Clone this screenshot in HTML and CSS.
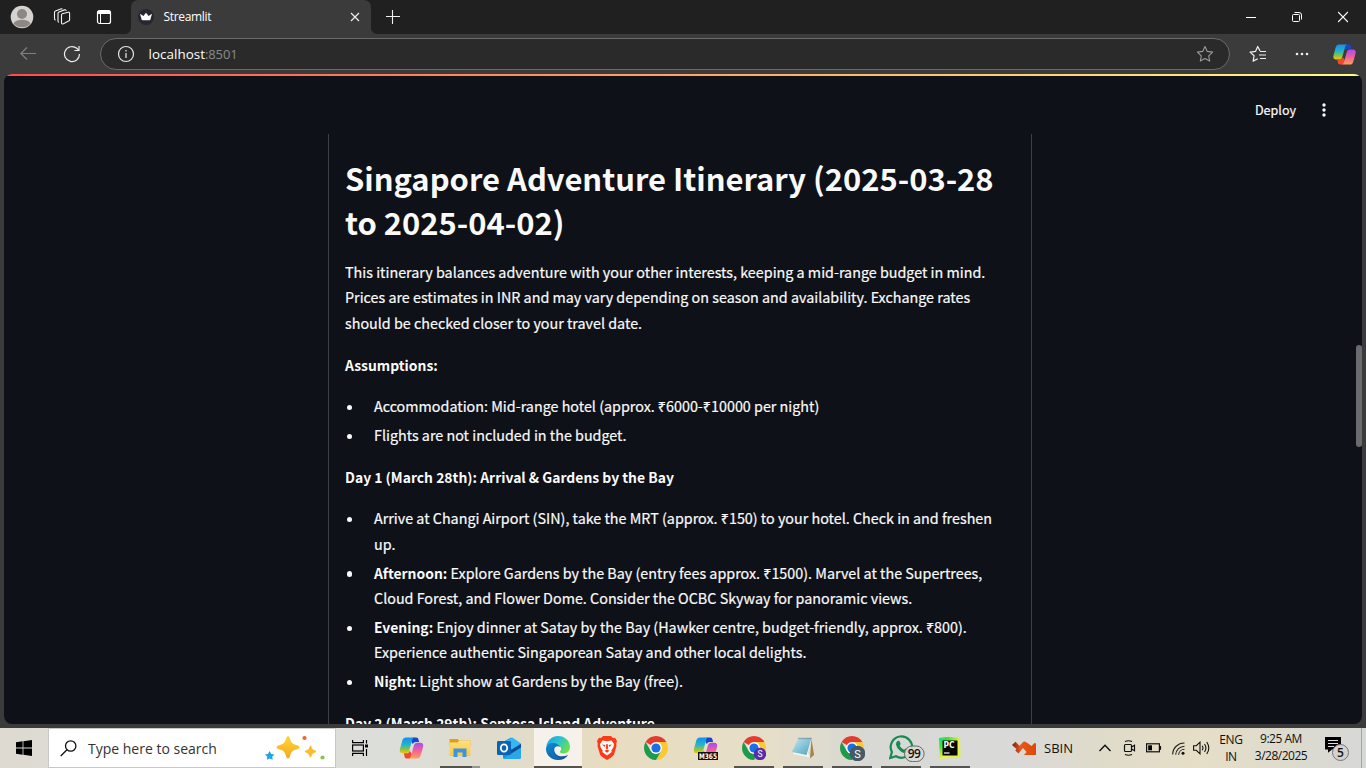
FILE: index.html
```html
<!DOCTYPE html>
<html lang="en">
<head>
<meta charset="utf-8">
<title>Streamlit</title>
<link rel="stylesheet" href="styles.css">
</head>
<body>
<svg class="defs" width="0" height="0">
  <defs>
    <linearGradient id="cpA" x1="0" y1="0" x2="0" y2="1"><stop offset="0" stop-color="#1a8fe8"/><stop offset=".45" stop-color="#22b3d0"/><stop offset=".75" stop-color="#8fc33a"/><stop offset="1" stop-color="#f5c518"/></linearGradient>
    <linearGradient id="cpB" x1="0" y1="0" x2="0" y2="1"><stop offset="0" stop-color="#a64bf0"/><stop offset=".5" stop-color="#f0609a"/><stop offset="1" stop-color="#ffa05a"/></linearGradient>
    <linearGradient id="edA" x1="0" y1="0" x2="1" y2=".6"><stop offset="0" stop-color="#1b9de2"/><stop offset=".5" stop-color="#2bc3d2"/><stop offset="1" stop-color="#6adf50"/></linearGradient>
    <linearGradient id="edB" x1="0" y1="0" x2="1" y2="1"><stop offset="0" stop-color="#0d8ddb"/><stop offset="1" stop-color="#114a8b"/></linearGradient>
    <linearGradient id="star" x1="0" y1="0" x2="0" y2="1"><stop offset="0" stop-color="#ffd83a"/><stop offset="1" stop-color="#f2a71b"/></linearGradient>
    <linearGradient id="fold" x1="0" y1="0" x2="0" y2="1"><stop offset="0" stop-color="#ffe082"/><stop offset="1" stop-color="#fbc646"/></linearGradient>
    <linearGradient id="note" x1="0" y1="0" x2="1" y2="1"><stop offset="0" stop-color="#c4e8f0"/><stop offset="1" stop-color="#4ba3bd"/></linearGradient>
    <linearGradient id="pyc" x1="0" y1="0" x2="1" y2="1"><stop offset="0" stop-color="#21d789"/><stop offset=".25" stop-color="#3be234"/><stop offset=".55" stop-color="#f2f03a"/><stop offset="1" stop-color="#d8ee4a"/></linearGradient>
    <linearGradient id="sbn" x1="0" y1="0" x2="1" y2="0"><stop offset="0" stop-color="#7d1d0c"/><stop offset=".35" stop-color="#e8571c"/><stop offset="1" stop-color="#dd4a06"/></linearGradient>
    <symbol id="copilot" viewBox="0 0 24 22">
      <path d="M13.5.5h3.200c1.200 0 1.900.8 2.200 1.800l.7 2.700h-3.200c-1.600 0-2.600.8-3 2.300L11 3z" fill="#1846c4"/>
      <path d="M6.500.5h8.200c-1 .3-1.600 1.200-2 2.500l-3 10.500c-.5 1.700-1.500 2.800-3.300 2.800H3.200C.8 16.300-.2 14.600.4 12.200l2.400-8.700C3.400 1.500 4.600.5 6.500.5z" fill="url(#cpA)"/>
      <path d="M10.500 21.500H7.300c-1.200 0-1.900-.8-2.200-1.800L4.400 16.300h2.500c1.800 0 2.800-1 3.300-2.600L13 18z" fill="#f04a2a"/>
      <path d="M17.500 21.500H9.400c1-.3 1.600-1.200 2-2.500l3-10.500c.5-1.700 1.500-2.800 3.300-2.800h3.100c2.400 0 3.400 1.700 2.800 4.100l-2.400 8.700c-.6 2-1.800 3-3.700 3z" fill="url(#cpB)"/>
    </symbol>
    <symbol id="chrome" viewBox="0 0 24 24">
      <path d="M12 12 1.610 6A12 12 0 0 1 22.390 6z" fill="#e33b2e"/>
      <path d="M12 12V6H22.390A12 12 0 0 1 12 24l5.200-9z" fill="#fcc934"/>
      <path d="M1.610 6 6.800 15 12 18l5.200-3L12 24A12 12 0 0 1 1.610 6z" fill="#1e9a4a"/>
      <circle cx="12" cy="12" r="5.900" fill="#fff"/><circle cx="12" cy="12" r="4.600" fill="#1a6fe8"/>
    </symbol>
  </defs>
</svg>

<div class="tabstrip">
  <div class="tabtools">
    <svg width="24" height="24" viewBox="0 0 24 24"><circle cx="12" cy="12" r="11.300" fill="#d5d2cf"/><circle cx="12" cy="9" r="5" fill="#8d8884"/><path d="M3.500 18.500c2-3 5-3.700 8.500-3.700s6.500.7 8.500 3.700a11.300 11.300 0 0 1-17 0z" fill="#8d8884"/></svg>
    <svg width="18" height="18" viewBox="0 0 18 18" fill="none" stroke="#f2f2f2" stroke-width="1.100"><path d="M9.300 5.700 15 4.200q1.600-.3 1.600 1.200v6.300q0 1-1 1.400l-5.200 2.600q-1.900.8-1.900-1V7.200q0-1.200.8-1.500z"/><path d="M6 14.200q-1 0-1-1.200V5.300q0-1 1-1.400l5.500-2q1.500-.4 1.700.9"/><path d="M2.700 12q-1.200 0-1.200-1.200V4.400q0-1 1-1.400L7.600 1q1.500-.5 1.700.4"/></svg>
    <svg width="16" height="16" viewBox="0 0 16 16"><rect x="1.500" y="1.500" width="13" height="13" rx="2" fill="none" stroke="#fff" stroke-width="1.200"/><path d="M1.500 5V3.500a2 2 0 0 1 2-2h9a2 2 0 0 1 2 2V5z" fill="#fff"/><path d="M4.500 5v9" stroke="#fff"/></svg>
  </div>
  <div class="tab">
    <svg width="16" height="16" viewBox="0 0 16 16"><circle cx="8" cy="8" r="8" fill="#262730"/><path d="M2 4.700 5.400 7 8 3.800 10.600 7 14 4.700 12.400 10.400q-.2.800-1 .8H4.600q-.8 0-1-.8z" fill="#fff"/></svg>
    <span class="tabtitle">Streamlit</span>
    <svg width="10" height="10" viewBox="0 0 10 10" stroke="#eee" stroke-width="1.200"><path d="M1 1l8 8M9 1 1 9"/></svg>
  </div>
  <svg class="plus" width="14" height="14" viewBox="0 0 14 14" stroke="#f0f0f0" stroke-width="1.100"><path d="M6.500 0v14M0 6.500h14"/></svg>
  <div class="winctl">
    <svg width="10" height="12" viewBox="0 0 10 12" stroke="#fff"><path d="M0 6.500h10"/></svg>
    <svg width="10" height="12" viewBox="0 0 10 12" fill="none" stroke="#fff"><rect x=".5" y="3.500" width="7" height="7" rx="1"/><path d="M2.500 1.500H7q2.500 0 2.500 2.500v4.500"/></svg>
    <svg width="10" height="12" viewBox="0 0 10 12" stroke="#fff" stroke-width="1.200"><path d="M0 1l10 10M10 1 0 11"/></svg>
  </div>
</div>

<div class="toolbar">
  <svg class="back" width="16" height="14" viewBox="0 0 16 14" fill="none" stroke="#808080" stroke-width="1.200"><path d="M16 6.500H.8M7 .5l-6.200 6 6.200 6"/></svg>
  <svg class="reload" width="18" height="18" viewBox="0 0 18 18" fill="none" stroke="#eee" stroke-width="1.200"><path d="M16.500 9a7.500 7.500 0 1 1-2.700-5.700L15.800 5.300"/><path d="M16 1v4.500h-4.600"/></svg>
  <div class="address">
    <svg width="18" height="18" viewBox="0 0 18 18"><circle cx="9" cy="9" r="7.500" fill="none" stroke="#e6e6e6" stroke-width="1.200"/><path d="M9 8v5M9 5v1.500" stroke="#c8c8c8" stroke-width="1.500"/></svg>
    <span class="url"><span class="host">localhost</span><span class="port">:8501</span></span>
    <svg width="18" height="18" viewBox="0 0 18 18" fill="none" stroke="#9a9a9a" stroke-width="1.100" stroke-linejoin="round"><path d="M9 1.500l2.300 4.900 5.300.7-3.900 3.700 1 5.300L9 13.500l-4.700 2.600 1-5.300L1.400 7.100l5.300-.7z"/></svg>
  </div>
  <svg class="favs" width="18" height="18" viewBox="0 0 18 18" fill="none" stroke="#f0f0f0" stroke-width="1.200" stroke-linejoin="round"><path d="M11 5.900 8.700 1.500 6.600 6.300l-5.500.8 4 3.700-1 5.300 4.700-2.400"/><path d="M11 6.500h6M10 10h7M11 13.500h6"/></svg>
  <svg class="more" width="14" height="4" viewBox="0 0 14 4" fill="#eee"><circle cx="2" cy="2" r="1.300"/><circle cx="7" cy="2" r="1.300"/><circle cx="12" cy="2" r="1.300"/></svg>
  <svg class="cp" width="23" height="21"><use href="#copilot"/></svg>
</div>

<div class="frame">
  <div class="page">
    <div class="appbar">
      <span class="deploy">Deploy</span>
      <svg class="kebab" width="4" height="14" viewBox="0 0 4 14" fill="#fafafa"><circle cx="2" cy="2" r="1.700"/><circle cx="2" cy="7" r="1.700"/><circle cx="2" cy="12" r="1.700"/></svg>
    </div>
    <div class="doc">
      <h1>Singapore Adventure Itinerary (2025-03-28<br>to 2025-04-02)</h1>
      <p>This itinerary balances adventure with your other interests, keeping a mid-range budget in mind.<br>Prices are estimates in INR and may vary depending on season and availability. Exchange rates<br>should be checked closer to your travel date.</p>
      <p><b>Assumptions:</b></p>
      <ul>
        <li><div>Accommodation: Mid-range hotel (approx. ₹6000-₹10000 per night)</div></li>
        <li><div>Flights are not included in the budget.</div></li>
      </ul>
      <p><b>Day 1 (March 28th): Arrival &amp; Gardens by the Bay</b></p>
      <ul>
        <li><div>Arrive at Changi Airport (SIN), take the MRT (approx. ₹150) to your hotel. Check in and freshen<br>up.</div></li>
        <li><div><b>Afternoon:</b> Explore Gardens by the Bay (entry fees approx. ₹1500). Marvel at the Supertrees,<br>Cloud Forest, and Flower Dome. Consider the OCBC Skyway for panoramic views.</div></li>
        <li><div><b>Evening:</b> Enjoy dinner at Satay by the Bay (Hawker centre, budget-friendly, approx. ₹800).<br>Experience authentic Singaporean Satay and other local delights.</div></li>
        <li><div><b>Night:</b> Light show at Gardens by the Bay (free).</div></li>
      </ul>
      <p><b>Day 2 (March 29th): Sentosa Island Adventure</b></p>
    </div>
    <div class="scrollthumb"></div>
  </div>
</div>

<div class="taskbar">
  <div class="start"><svg width="16" height="16" viewBox="0 0 16 16"><path d="M0 2.200 6.600 1.300v6.300H0zM7.400 1.200 16 0v7.600H7.400zM0 8.400h6.600v6.300L0 13.800zM7.400 8.400H16V16l-8.600-1.200z"/></svg></div>
  <div class="search">
    <svg width="17" height="17" viewBox="0 0 17 17" fill="none" stroke="#111" stroke-width="1.300"><circle cx="10.700" cy="6" r="5.200"/><path d="M7 9.700.7 16"/></svg>
    <span class="hint">Type here to search</span>
    <svg width="62" height="26" viewBox="0 0 62 26"><path d="M24 1q1.500 0 2 2.500c1 4 2.500 5.700 7 6.800q2.500.6 2.500 2t-2.500 2c-4.500 1.100-6 2.800-7 6.800q-.5 2.500-2 2.500t-2-2.500c-1-4-2.500-5.700-7-6.800q-2.500-.6-2.500-2t2.500-2c4.500-1.100 6-2.800 7-6.800Q22.500 1 24 1z" fill="url(#star)"/><path d="M46.500 10.500q.8 0 1.200 2 .5 2.100 2.800 2.800 1.700.4 1.700 1.200t-1.700 1.200q-2.300.6-2.800 2.800-.4 2-1.200 2t-1.200-2q-.5-2.200-2.800-2.800-1.700-.4-1.700-1.200t1.700-1.200q2.300-.7 2.800-2.800.4-2 1.200-2z" fill="#f9bd2d"/><path d="M5.500 16l1.800 3 3.200.4-2.300 2.300.5 3.100-3-1.400-2.700 1.300.2-3.100L.8 19.600l3.200-.5z" fill="#18a8e8"/><circle cx="40.500" cy="3" r="2.100" fill="#f0652f"/><circle cx="58.500" cy="22.500" r="2.100" fill="#8cc63f"/></svg>
  </div>
  <div class="taskview"><svg width="17" height="16" viewBox="0 0 17 16" fill="none" stroke="#000" stroke-width="1.200"><path d="M.6 0v2.600h10.800V0M.6 16v-2.600h10.800V16M14.500 0v3.500M14.500 9v7"/><rect x=".6" y="5" width="10.800" height="6"/><path d="M13 6h3" stroke-width="3"/></svg></div>
  <div class="apps">
    <div class="app"><svg width="25" height="22"><use href="#copilot"/></svg></div>
    <div class="app run multi"><svg width="22" height="20" viewBox="0 0 22 20"><path d="M.500 1h8l1.500 1.500h11.500V8H.5z" fill="#e0a010"/><path d="M.500 4.500h8l2-2h11V18H.5z" fill="url(#fold)"/><path d="M4.500 10.500h13V19h-4v-4.500h-5V19h-4z" fill="#4095d8"/></svg></div>
    <div class="app"><svg width="24" height="24" viewBox="0 0 24 24"><path d="M6 6 14 1.500 24 8v13q0 2-2 2H8q-2 0-2-2z" fill="#1490df"/><path d="M8 5.500l7.500-4 8.500 6-9 6z" fill="#35b8f1"/><path d="M14 14l10-6v5L12 21z" fill="#0a4a96"/><path d="M6 22.500 24 11.500V21q0 2-2 2H8z" fill="#28a8ea"/><rect y="5" width="14" height="14" rx="1.300" fill="#0b63b8"/><ellipse cx="7" cy="12" rx="3.200" ry="3.700" fill="none" stroke="#fff" stroke-width="1.800"/></svg></div>
    <div class="app run active"><svg width="24" height="24" viewBox="0 0 24 24"><path d="M.3 10.500C1.300 4.200 6 0 12 0c7 0 12 5 12 10.800 0 4.200-3 6.700-6.700 6.700-2.500 0-3.600-1-3.300-2 1.300-1 1.500-2.800.7-4.200C12.800 8 6 5.500.3 10.500z" fill="url(#edA)"/><path d="M0 12.500C.3 8.700 3.500 6.800 7 6.900c3.500.1 6.200 1.700 7.400 4-5.500-2.300-7.800 2.500-4.900 6.500 2.500 3.400 8 3.700 12.700 1.500C19.700 22.500 16 24 12 24 5.500 24-.3 19 0 12.500z" fill="url(#edB)"/><path d="M7.500 13c-.9 6.300 4.500 9.800 8.500 10.300C9 25 3.500 19 5 14.500q.8-1.800 2.500-1.500z" fill="#1474bd" opacity=".65"/></svg></div>
    <div class="app"><svg width="20" height="24" viewBox="0 0 20 24"><path d="M6 0h8l2 2 2-.2L20 5l-.8 3 .3 2-2.500 8.500Q16.500 20 10 24 3.500 20 3 18.500L.5 10l.3-2L0 5l2-3.200L4 2z" fill="#fb3a18"/><path d="M5.500 4.500 10 5.300l4.500-.8L17 8l-.7 3.500-2 3 .4 1.500L10 19.500 5.300 16l.4-1.500-2-3L3 8z" fill="#fff"/><path d="M5 8.500l3.500.5L7.500 11zM15 8.500l-3.500.5 1 2zM9.300 8h1.400l.5 4.500-1.200.8-1.200-.8zM7.500 14.700l2.500-1.200 2.500 1.200-2.500 2z" fill="#fb3a18"/></svg></div>
    <div class="app"><svg width="24" height="24"><use href="#chrome"/></svg></div>
    <div class="app"><svg width="25" height="24" viewBox="0 0 25 24"><svg width="25" height="22" y="1"><use href="#copilot"/></svg><rect x="5" y="16" width="20" height="8" fill="#101010"/><text x="6" y="22.600" class="m365" textLength="18" lengthAdjust="spacingAndGlyphs">M365</text></svg></div>
    <div class="app run"><svg width="24" height="24" viewBox="0 0 24 24"><use href="#chrome" width="24" height="24"/><circle cx="18" cy="18" r="6.200" fill="#5b2ca8"/><text x="18" y="21" class="initial s1">S</text></svg></div>
    <div class="app run"><svg width="24" height="24" viewBox="0 0 24 24"><path d="M20.500 3l2.500 16-4 3.500z" fill="#a6834a"/><path d="M7.500 2h13L17 17.500l2 4L2 18z" fill="#f4f4f0"/><path d="M7.500 2h13l-5 17L1 16z" fill="url(#note)"/><path d="M7.500 2.500h13" stroke="#6a7a80" stroke-width="1.500" stroke-dasharray="1 1"/></svg></div>
    <div class="app run"><svg width="26" height="26" viewBox="0 0 26 26"><use href="#chrome" x="1" y="1" width="24" height="24"/><circle cx="18.500" cy="18.500" r="7.800" fill="#455a64"/><text x="18.500" y="22.500" class="initial s2">S</text></svg></div>
    <div class="app run whats"><svg width="36" height="28" viewBox="0 0 36 28"><path d="M1.200 24 2.900 18A10.700 10.700 0 1 1 7 22.300z" fill="none" stroke="#178a52" stroke-width="2.200"/><path d="M8.500 7q1.500-1 2.300.7l.8 2q.2.700-1 2 1.500 2.700 4.500 4 1.200-1.500 1.700-1.300l2.700 1.400q.5 3-2.700 3.500C13 19.500 7 14 7 10q.2-2 1.500-3z" fill="#178a52"/><rect x="15.500" y="12" width="19.600" height="15.600" rx="7.800" fill="#dadad6" fill-opacity=".9" stroke="#666" stroke-width="1"/><text x="25.300" y="24.300" class="count" textLength="13">99</text></svg></div>
    <div class="app run"><svg width="22" height="22" viewBox="0 0 22 22"><path d="M0 1 7 0l14 1 .5 20L11 21 1 21.500z" fill="url(#pyc)"/><rect x="3.500" y="3.500" width="15" height="15" fill="#050505"/><text x="4.600" y="11" class="pc" textLength="11" lengthAdjust="spacingAndGlyphs">PC</text><path d="M5 16h5.500" stroke="#fff" stroke-width="1.200"/></svg></div>
  </div>
  <div class="tray">
    <svg class="stock" width="24" height="14" viewBox="0 0 24 14"><path d="M0 4 3.500.8l4 4L12 .3l3.500 1.700 4 3L22.500 2 24 2.500V14H12l2.500-3-3.500-4L6.500 12.500 3.300 9.500 4.500 8z" fill="url(#sbn)"/></svg>
    <span class="sbin">SBIN</span>
    <svg class="chev" width="12" height="8" viewBox="0 0 12 8" fill="none" stroke="#111" stroke-width="1.400"><path d="M.5 7 6 1.200 11.500 7"/></svg>
    <svg class="cam" width="13" height="16" viewBox="0 0 13 16" fill="none" stroke="#111" stroke-width="1.200"><rect x="1.500" y="4.500" width="7" height="7" rx="1"/><path d="M8.500 7l3-1.800v5.600l-3-1.800M2 1.500q3.500-1.500 7 0M2 14.500q3.500 1.500 7 0"/></svg>
    <svg class="bat" width="16" height="10" viewBox="0 0 16 10"><rect x=".6" y=".8" width="12.800" height="8" fill="none" stroke="#111" stroke-width="1.200"/><rect x="2.200" y="2.300" width="3.800" height="5"/><path d="M14.500 3v3.800" stroke="#111" stroke-width="1.200"/></svg>
    <svg class="wifi" width="13" height="13" viewBox="0 0 13 13" fill="none" stroke="#222" stroke-width="1.100"><path d="M.7 12.500A11.500 11.500 0 0 1 12.500 1M3.700 12.700a9 9 0 0 1 8.800-8.500M6.600 12.700a6 6 0 0 1 5.900-5.500"/><circle cx="11" cy="11.300" r="1.500" fill="#111" stroke="none"/></svg>
    <svg class="vol" width="17" height="14" viewBox="0 0 17 14" fill="none" stroke="#111" stroke-width="1.100"><path d="M.6 4.700h2.700L7 1.200v11.600L3.300 9.300H.6zM9.200 4.800q1.500 2.200 0 4.400M11.500 3q2.800 4 0 8M13.700 1q4.200 6 0 12"/></svg>
    <div class="stack lang"><span>ENG</span><span>IN</span></div>
    <div class="stack clock"><span>9:25 AM</span><span>3/28/2025</span></div>
    <svg class="action" width="26" height="26" viewBox="0 0 26 26"><path d="M1 2h16v12.500H8l-4 3.300v-3.300H1z" fill="#000"/><path d="M4 5.500h10M4 8.500h10M4 11.500h6" stroke="#ddd"/><circle cx="16.500" cy="17.500" r="8" fill="#d2d3d0" stroke="#777"/><text x="16.500" y="21.700" class="five">5</text></svg>
    <div class="peek"></div>
  </div>
</div>
</body>
</html>
```
FILE: styles.css
```css
* { box-sizing: border-box; }
body { margin: 0; width: 1366px; height: 768px; overflow: hidden; background: #3b3b3b; font-family: "Open Sans", "Noto Sans", sans-serif; display: flex; flex-direction: column; }
svg { display: block; flex: none; }
span { white-space: nowrap; }
.defs { position: absolute; }

.tabstrip { height: 34px; flex: none; background: #202020; display: flex; align-items: center; }
.tabtools { width: 131px; padding-left: 10px; display: flex; align-items: center; }
.tabtools svg:nth-child(2) { margin-left: 19px; }
.tabtools svg:nth-child(3) { margin-left: 25px; }
.tab { width: 240px; height: 34px; background: #3b3b3b; border-radius: 7px 7px 0 0; display: flex; align-items: center; padding: 0 11px 0 7px; color: #fff; font-size: 12px; position: relative; }
.tab::before, .tab::after { content: ""; position: absolute; bottom: 0; width: 6px; height: 6px; }
.tab::before { left: -6px; background: radial-gradient(circle at 0 0, #202020 5.500px, #3b3b3b 6.500px); }
.tab::after { right: -6px; background: radial-gradient(circle at 100% 0, #202020 5.500px, #3b3b3b 6.500px); }
.tabtitle { margin-left: 9.500px; padding-bottom: 1px; flex: 1; letter-spacing: -.32px; }
.plus { margin-left: 15px; }
.winctl { margin-left: auto; margin-right: 18px; display: flex; gap: 36px; }

.toolbar { height: 40px; flex: none; display: flex; align-items: center; background: #3b3b3b; }
.back { margin-left: 20px; }
.reload { margin-left: 27px; }
.address { margin-left: 19px; width: 1130px; height: 32px; background: #2a2a2a; border: 1px solid #6a6a6a; border-radius: 16px; display: flex; align-items: center; padding: 0 15px 0 16px; }
.url { margin-left: 13.500px; flex: 1; font-size: 13px; color: #fff; }
.host { font-size: 13.400px; letter-spacing: .05px; }
.port { color: #8a8a8a; letter-spacing: -.15px; }
.favs { margin-left: 19px; }
.more { margin-left: 28px; }
.cp { margin-left: 24px; }

.frame { height: 654px; flex: none; padding: 0 4px 4px; background: #3b3b3b; }
.page { height: 650px; background: #0e1117; border-radius: 8px; overflow: hidden; position: relative; font-family: "Noto Sans CJK SC", "Noto Sans", sans-serif; color: #fafafa; }
.page::before { content: ""; position: absolute; left: 0; right: 0; top: 0; height: 2px; background: linear-gradient(90deg, #ff4b4b, #fffd80); }
.appbar { height: 60px; padding: 13px 36px 0 0; display: flex; justify-content: flex-end; align-items: center; gap: 26px; font-size: 12.550px; }
.deploy { padding-bottom: 2px; -webkit-text-stroke: .2px #fafafa; }
.kebab { margin-bottom: 2px; }
.doc { margin-left: 324px; width: 704px; height: 590px; border: solid #3c3f45; border-width: 0 1px; padding: 22px 0 0 16px; font-size: 14.330px; line-height: 25.600px; overflow: hidden; white-space: nowrap; -webkit-text-stroke: .2px #fafafa; }
.doc b { font-size: 13.900px; line-height: 1; -webkit-text-stroke: 0; }
.doc h1 { margin: 0 0 14.800px; font-size: 30.950px; line-height: 44px; font-weight: 700; -webkit-text-stroke: 0; }
.doc p { margin: 0 0 16px; }
.doc ul { list-style: none; margin: 0 0 16px; padding: 0; }
.doc li { display: flex; align-items: flex-start; margin-bottom: 3.200px; }
.doc li::before { content: ""; width: 5.400px; height: 5.400px; border-radius: 50%; background: #fafafa; margin: 11.800px 22px 0 1.600px; }
.doc li:last-child { margin-bottom: 0; }
.scrollthumb { position: absolute; right: 0; top: 271px; width: 6px; height: 102px; border-radius: 3px; background: #6b6b6f; }

.taskbar { height: 40px; flex: none; display: flex; align-items: center; color: #111; background: linear-gradient(90deg, #dedad2 0, #dcdeda 390px, #e0dccc 500px, #e8dcc0 610px, #e6dfc8 760px, #d8d8d4 870px, #d9d9d9 1010px, #dfdbca 1100px, #e6dec6 1200px, #d6d8d6 1366px); }
.start { width: 48px; display: flex; justify-content: center; }
.search { width: 288px; height: 40px; background: #fff; border: 1px solid #c8c8c8; display: flex; align-items: center; padding: 0 9px 0 11px; font-size: 14px; color: #333; }
.hint { margin-left: 11px; flex: 1; }
.taskview { width: 51px; padding-left: 16px; }
.apps { display: flex; gap: 1px; height: 40px; }
.app { width: 48px; height: 40px; display: flex; align-items: center; justify-content: center; position: relative; }
.whats { padding: 0 0 0 11px; }
.run::after { content: ""; position: absolute; left: 4px; bottom: 0; width: 40px; height: 2px; background: #55534f; }
.multi::after { left: 4px; background: linear-gradient(90deg, #55534f 32px, #979590 32px); }
.active { background: #f6f1ea; }
.active::after { left: 0; width: 48px; }
.m365 { font: bold 7.500px "DejaVu Sans"; fill: #fff; }
.initial { font-family: Roboto, sans-serif; fill: #fff; text-anchor: middle; }
.s1 { font-size: 8.500px; }
.s2 { font-size: 11px; }
.count { font: 600 12px "Open Sans"; text-anchor: middle; fill: #111; }
.pc { font: bold 8px "DejaVu Sans"; fill: #fff; }
.five { font: 600 12px "Open Sans"; text-anchor: middle; fill: #111; }
.tray { flex: 1; height: 40px; display: flex; align-items: center; font-size: 12px; }
.stock { margin-left: 38px; }
.sbin { margin-left: 8px; font-size: 13px; }
.chev { margin-left: 26px; }
.cam { margin-left: 12px; }
.bat { margin-left: 10px; }
.wifi { margin-left: 10px; }
.vol { margin-left: 8px; }
.stack { display: flex; flex-direction: column; align-items: center; line-height: 17px; }
.lang { width: 24px; margin-left: 9px; letter-spacing: -.4px; }
.clock { width: 54px; margin-left: 11px; letter-spacing: -.5px; padding-bottom: 2px; line-height: 17.500px; }
.action { margin-left: 16px; }
.peek { margin-left: auto; width: 5px; height: 40px; border-left: 1px solid #a8a8a8; }
```
